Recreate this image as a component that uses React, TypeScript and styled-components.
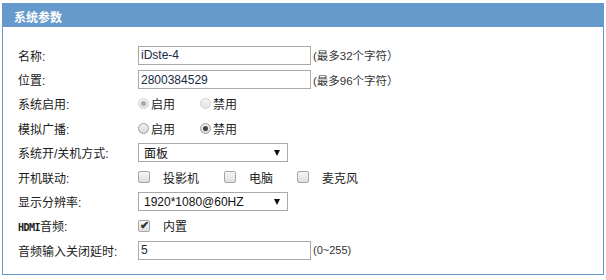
import React from "react";
import styled, { createGlobalStyle } from "styled-components";

const Global = createGlobalStyle`
  html, body { margin: 0; padding: 0; background: #fff; }
  body { font-family: "Liberation Sans", "Noto Sans CJK SC", sans-serif; color: #222; }
`;

const Panel = styled.section`
  margin: 3px 0 0 2px;
  width: 602px;
  height: 272px;
  box-sizing: border-box;
  border: 1px solid #6699cc;
  display: flex;
  flex-direction: column;
`;

const Header = styled.div`
  height: 23px;
  flex: none;
  background: #6699cc;
  color: #fff;
  font-size: 12px;
  font-weight: bold;
  display: flex;
  align-items: center;
  padding-left: 11px;
  padding-top: 1px;
  box-sizing: border-box;
`;

const Form = styled.div`
  display: grid;
  grid-template-columns: 120px 1fr;
  grid-auto-rows: 24.4px;
  align-items: center;
  padding: 16px 0 0 15px;
`;

const Label = styled.div`
  font-size: 12px;
  white-space: nowrap;
  color: #1a1a1a;
`;

const Mono = styled.span`
  font-family: "DejaVu Sans Mono", monospace;
  font-size: 10px;
  font-weight: bold;
  letter-spacing: -0.5px;
`;

const Control = styled.div`
  display: flex;
  align-items: center;
  font-size: 12px;
  height: 100%;
`;

const TextInput = styled.div`
  width: 173px;
  height: 19px;
  box-sizing: border-box;
  border: 1px solid #a9a9a9;
  font-size: 12px;
  color: #1a2a44;
  display: flex;
  align-items: center;
  padding-left: 2px;
`;

const Hint = styled.span<{ $size?: number }>`
  font-size: ${(p) => p.$size ?? 11}px;
  margin-left: 2px;
  color: #333;
`;

const Select = styled.div`
  width: 150px;
  height: 19px;
  box-sizing: border-box;
  border: 1px solid #a9a9a9;
  font-size: 12px;
  color: #111;
  display: flex;
  align-items: center;
  justify-content: space-between;
  padding: 0 7px 0 5px;
`;

const Arrow = styled.span`
  width: 0;
  height: 0;
  border-left: 3.5px solid transparent;
  border-right: 3.5px solid transparent;
  border-top: 6px solid #111;
`;

const Option = styled.label<{ $width?: number }>`
  display: flex;
  align-items: center;
  width: ${(p) => (p.$width ? `${p.$width}px` : "auto")};
  font-size: 12px;
`;

const Radio = styled.span<{ $checked?: boolean; $disabled?: boolean }>`
  width: 11px;
  height: 11px;
  box-sizing: border-box;
  border-radius: 50%;
  border: 1px solid ${(p) => (p.$disabled ? "#d0d0d0" : "#9c9c9c")};
  background: ${(p) =>
    p.$disabled
      ? "linear-gradient(#f4f4f4, #e6e6e6)"
      : "linear-gradient(#f2f2f2, #d8d8d8)"};
  margin-right: 2px;
  display: flex;
  align-items: center;
  justify-content: center;
  &::after {
    content: "";
    display: ${(p) => (p.$checked ? "block" : "none")};
    width: 5px;
    height: 5px;
    border-radius: 50%;
    background: ${(p) => (p.$disabled ? "#a8a8a8" : "#444")};
  }
`;

const Check = styled.span`
  width: 12px;
  height: 12px;
  box-sizing: border-box;
  border-radius: 2px;
  border: 1px solid #a6a6a6;
  background: linear-gradient(#f6f6f6, #dedede);
  margin-right: 13px;
  display: flex;
  align-items: center;
  justify-content: center;
  font-size: 11px;
  font-weight: bold;
  line-height: 1;
  color: #333;
`;

const CheckText = styled.span<{ $gap?: number }>`
  margin-right: ${(p) => p.$gap ?? 0}px;
`;

export default function App() {
  return (
    <>
      <Global />
      <Panel>
        <Header>系统参数</Header>
        <Form>
          <Label>名称:</Label>
          <Control>
            <TextInput>iDste-4</TextInput>
            <Hint $size={11.5}>(最多32个字符）</Hint>
          </Control>

          <Label>位置:</Label>
          <Control>
            <TextInput>2800384529</TextInput>
            <Hint $size={11.5}>(最多96个字符）</Hint>
          </Control>

          <Label>系统启用:</Label>
          <Control>
            <Option $width={62}>
              <Radio $checked $disabled />
              启用
            </Option>
            <Option>
              <Radio $disabled />
              禁用
            </Option>
          </Control>

          <Label>模拟广播:</Label>
          <Control>
            <Option $width={62}>
              <Radio />
              启用
            </Option>
            <Option>
              <Radio $checked />
              禁用
            </Option>
          </Control>

          <Label>系统开/关机方式:</Label>
          <Control>
            <Select>
              面板
              <Arrow />
            </Select>
          </Control>

          <Label>开机联动:</Label>
          <Control>
            <Option>
              <Check />
              <CheckText $gap={25}>投影机</CheckText>
            </Option>
            <Option>
              <Check />
              <CheckText $gap={24}>电脑</CheckText>
            </Option>
            <Option>
              <Check />
              <CheckText>麦克风</CheckText>
            </Option>
          </Control>

          <Label>显示分辨率:</Label>
          <Control>
            <Select>
              1920*1080@60HZ
              <Arrow />
            </Select>
          </Control>

          <Label>
            <Mono>HDMI</Mono>音频:
          </Label>
          <Control>
            <Option>
              <Check>✔</Check>
              <CheckText>内置</CheckText>
            </Option>
          </Control>

          <Label>音频输入关闭延时:</Label>
          <Control>
            <TextInput>5</TextInput>
            <Hint>(0~255)</Hint>
          </Control>
        </Form>
      </Panel>
    </>
  );
}
